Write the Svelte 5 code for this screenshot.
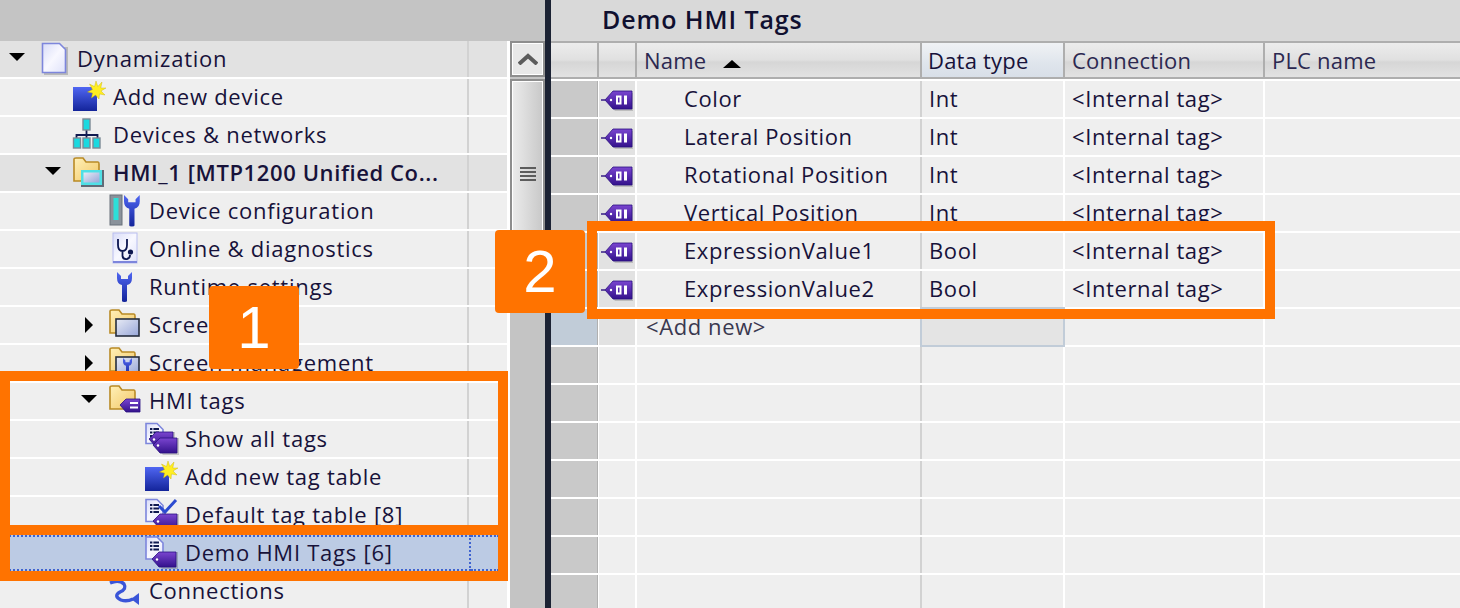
<script>
	const treeRows = [
		{ level: 0, arrow: 'open', icon: 'doc', label: 'Dynamization', dark: true },
		{ level: 1, icon: 'add', label: 'Add new device' },
		{ level: 1, icon: 'network', label: 'Devices & networks' },
		{ level: 1, arrow: 'open', icon: 'folderHmi', label: 'HMI_1 [MTP1200 Unified Co...', dark: true, strong: true },
		{ level: 2, icon: 'config', label: 'Device configuration' },
		{ level: 2, icon: 'online', label: 'Online & diagnostics' },
		{ level: 2, icon: 'wrench', label: 'Runtime settings' },
		{ level: 2, arrow: 'closed', icon: 'folderScreen', label: 'Screens' },
		{ level: 2, arrow: 'closed', icon: 'folderMgmt', label: 'Screen management' },
		{ level: 2, arrow: 'open', icon: 'folderTag', label: 'HMI tags' },
		{ level: 3, icon: 'showTags', label: 'Show all tags' },
		{ level: 3, icon: 'add', label: 'Add new tag table' },
		{ level: 3, icon: 'defaultTable', label: 'Default tag table [8]' },
		{ level: 3, icon: 'tagTable', label: 'Demo HMI Tags [6]', selected: true },
		{ level: 2, icon: 'connections', label: 'Connections' }
	];

	const tags = [
		{ name: 'Color', type: 'Int' },
		{ name: 'Lateral Position', type: 'Int' },
		{ name: 'Rotational Position', type: 'Int' },
		{ name: 'Vertical Position', type: 'Int' },
		{ name: 'ExpressionValue1', type: 'Bool' },
		{ name: 'ExpressionValue2', type: 'Bool' }
	];

	const emptyRows = Array(7);
</script>

{#snippet tagShape(x, y)}
	<g transform="translate({x} {y})">
		<path d="M2 9 L10 1 H26 V18 H10 Z" fill="#000" opacity="0.18" />
		<path d="M0 8 L7 1 H24 V16 H7 Z" fill="url(#tagFill)" stroke="#2a0f80" stroke-width="0.8" />
		<circle cx="5" cy="8.5" r="1.2" fill="#fff" />
	</g>
{/snippet}

{#snippet page(x, y, w, h)}
	<path d="M{x} {y} H{x + w - 6} L{x + w} {y + 6} V{y + h} H{x} Z" fill="url(#pageFill)" stroke="#7d86dc" stroke-width="1.6" />
{/snippet}

{#snippet tableLines(y)}
	<path d="M{5} {y} H14 M5 {y + 3.5} H14 M5 {y + 7} H14" stroke="#101a50" stroke-width="1.8" stroke-dasharray="2.4 1 7" />
{/snippet}

{#snippet folder()}
	<path d="M1 26 V4 Q1 3 3 3 H10 L13 7 H25 Q26 7 26 9 V26 Z" fill="url(#folderFill)" stroke="#b98a25" stroke-width="1.6" />
{/snippet}

{#snippet blueWrench(x, y, s)}
	<path transform="translate({x} {y}) scale({s})" d="M0 0 V6 Q0 12 5 13 V29 Q5 30 7.5 30 Q10 30 10 29 V13 Q15 12 15 6 V0 L11 4 V7 H4 V4 Z" fill="url(#blueFill)" />
{/snippet}

{#snippet icon(name)}
	<svg class="icon" viewBox="0 0 40 36" width="40" height="36" aria-hidden="true">
		{#if name === 'doc'}
			<rect x="7" y="6" width="24" height="28" fill="#000" opacity="0.18" />
			{@render page(5.5, 2.5, 23, 29)}
		{:else if name === 'add'}
			<rect x="0" y="8" width="24" height="24" fill="url(#blueFill)" />
			<path d="M23 2 L24.8 7.5 L29 3 L27.8 9 L33 9 L28 12 L32 16 L26.5 15 L26 20 L22.5 16 L18.5 19 L19.5 14 L14.5 13 L19.5 10.5 L16.5 5 L21.5 7.5 Z" fill="#ffee22" stroke="#c7b100" stroke-width="0.4" />
		{:else if name === 'network'}
			<path d="M13.5 12 V18 M3.5 22 V18 H24.5 V22 M13.5 18 V22" stroke="#101a50" stroke-width="1.8" fill="none" />
			<rect x="10" y="2" width="7" height="11" fill="#19d9e0" stroke="#7c8a96" stroke-width="1.4" />
			<rect x="0.5" y="21" width="7" height="10" fill="#19d9e0" stroke="#7c8a96" stroke-width="1.4" />
			<rect x="10" y="21" width="7" height="10" fill="#19d9e0" stroke="#7c8a96" stroke-width="1.4" />
			<rect x="20" y="21" width="7" height="10" fill="#19d9e0" stroke="#7c8a96" stroke-width="1.4" />
		{:else if name === 'folderHmi'}
			{@render folder()}
			<rect x="8" y="15" width="23" height="17" fill="#5f6b78" />
			<rect x="8" y="15" width="21" height="15" fill="#4fe0e6" />
			<rect x="10.5" y="17.5" width="16" height="10" fill="url(#screenFill)" />
		{:else if name === 'folderScreen'}
			{@render folder()}
			<rect x="7" y="12" width="23" height="17" fill="url(#screenFill)" stroke="#262e3e" stroke-width="1.6" />
		{:else if name === 'folderMgmt'}
			{@render folder()}
			<rect x="7" y="12" width="23" height="17" fill="url(#screenFill)" stroke="#262e3e" stroke-width="1.6" />
			{@render blueWrench(14, 13, 0.6)}
		{:else if name === 'folderTag'}
			{@render folder()}
			<path d="M11 22 L17 16 H31 V29 H17 Z" fill="url(#tagFill)" stroke="#2a0f80" stroke-width="0.8" />
			<rect x="21" y="19" width="8" height="2" fill="#fff" />
			<rect x="21" y="23.5" width="8" height="2" fill="#fff" />
		{:else if name === 'config'}
			<rect x="1" y="2" width="12" height="30" fill="#8a929b" stroke="#68707a" />
			<rect x="4.5" y="5" width="5" height="22" fill="#2ce0d8" />
			{@render blueWrench(15, 2, 1.05)}
		{:else if name === 'online'}
			<rect x="4" y="2" width="24" height="30" fill="url(#pageFill)" stroke="#b9bef0" />
			<rect x="4" y="30" width="24" height="2" fill="#7d86dc" />
			<path d="M9 8 V14 Q9 20 13.5 20 Q18 20 18 14 V8 M13.5 20 V25 Q14 28.5 18 28 Q21 27.5 21 24" fill="none" stroke="#0c1650" stroke-width="1.8" />
			<circle cx="21.5" cy="21" r="2.6" fill="#0c1650" />
		{:else if name === 'wrench'}
			{@render blueWrench(8, 3, 1)}
		{:else if name === 'showTags'}
			{@render page(1, 2.5, 17, 20)}
			{@render tableLines(8)}
			{@render tagShape(4, 10)}
			{@render tagShape(8, 16)}
		{:else if name === 'defaultTable'}
			{@render page(1, 2.5, 17, 22)}
			{@render tableLines(8)}
			<path d="M14 9 L20 15 L31 3" fill="none" stroke="#2c4bd0" stroke-width="3" />
			{@render tagShape(8, 16)}
		{:else if name === 'tagTable'}
			{@render page(1, 2, 17, 22)}
			{@render tableLines(7.5)}
			{@render tagShape(7, 16)}
		{:else if name === 'connections'}
			<path d="M1 10 Q10 6 15 11 Q18 16 11 19 Q4 23 12 27 Q18 29 24 26" fill="none" stroke="#3a55d8" stroke-width="3.4" />
			<path d="M22 26 L30 20 V32 Z" fill="#3a55d8" />
		{/if}
	</svg>
{/snippet}

{#snippet tableCells(name, type, conn)}
	<div class="cell tag-cell">
		<svg viewBox="0 0 36 36" width="36" height="36" aria-hidden="true">
			<path d="M8 20 L16 12 H34 V30 H16 Z" fill="#000" opacity="0.16" />
			<path d="M2 19 H6" stroke="#2a0f80" stroke-width="1.4" />
			<path d="M6 19 L14 10 H33 V28 H14 Z" fill="url(#tagFill)" stroke="#2a0f80" stroke-width="0.8" />
			<circle cx="12" cy="19" r="1.2" fill="#fff" />
			<path d="M17 14.5 H22.5 V23.5 H17 Z M19 16.5 V21.5 H20.5 V16.5 Z" fill="#fff" fill-rule="evenodd" />
			<rect x="25" y="14.5" width="3" height="9" fill="#fff" />
		</svg>
	</div>
	<div class="cell name">{name}</div>
	<div class="cell sep">{type}</div>
	<div class="cell">{conn}</div>
	<div class="cell"></div>
{/snippet}

<svg class="defs" width="0" height="0" aria-hidden="true">
	<defs>
		<linearGradient id="tagFill" x1="0" y1="0" x2="0" y2="1">
			<stop offset="0" stop-color="#7a45d0" />
			<stop offset="1" stop-color="#34128c" />
		</linearGradient>
		<linearGradient id="blueFill" x1="0" y1="0" x2="0" y2="1">
			<stop offset="0" stop-color="#4f66f2" />
			<stop offset="1" stop-color="#13249a" />
		</linearGradient>
		<linearGradient id="pageFill" x1="0" y1="0" x2="1" y2="1">
			<stop offset="0" stop-color="#d8dcf8" />
			<stop offset="0.5" stop-color="#f8f8ff" />
			<stop offset="1" stop-color="#dfe2fa" />
		</linearGradient>
		<linearGradient id="folderFill" x1="0" y1="0" x2="1" y2="1">
			<stop offset="0" stop-color="#fff0b8" />
			<stop offset="1" stop-color="#f2c765" />
		</linearGradient>
		<linearGradient id="screenFill" x1="0" y1="0" x2="1" y2="1">
			<stop offset="0" stop-color="#e8ebf5" />
			<stop offset="1" stop-color="#97a6d8" />
		</linearGradient>
	</defs>
</svg>

<main class="screen">
	<section class="left">
		<div class="left-head"></div>
		<div class="left-body">
			<div class="tree">
				{#each treeRows as row}
					<div class="tree-row" class:dark={row.dark} class:selected={row.selected}>
						<div class="tree-main" style="padding-left: {5 + row.level * 36}px">
							<span class="arrow {row.arrow ?? ''}"></span>
							{@render icon(row.icon)}
							<span class="label" class:strong={row.strong}>{row.label}</span>
						</div>
						<div class="tree-extra"></div>
					</div>
				{/each}
			</div>
			<div class="scrollbar">
				<div class="scroll-up">
					<svg viewBox="0 0 20 12" width="20" height="12" aria-hidden="true">
						<path d="M1 11 L10 3 L19 11" fill="none" stroke="#5c5c5c" stroke-width="4" />
					</svg>
				</div>
				<div class="scroll-thumb">
					<span class="grip"></span>
				</div>
			</div>
		</div>
	</section>

	<div class="divider"></div>

	<section class="right">
		<h1 class="title">Demo HMI Tags</h1>
		<div class="table">
			<div class="row head">
				<div class="cell"></div>
				<div class="cell"></div>
				<div class="cell">Name <span class="sort"></span></div>
				<div class="cell active">Data type</div>
				<div class="cell">Connection</div>
				<div class="cell">PLC name</div>
			</div>
			{#each tags as tag}
				<div class="row">
					<div class="cell gutter"></div>
					{@render tableCells(tag.name, tag.type, '<Internal tag>')}
				</div>
			{/each}
			<div class="row add-row">
				<div class="cell gutter picked"></div>
				<div class="cell tag-cell"></div>
				<div class="cell add-new">&lt;Add new&gt;</div>
				<div class="cell sep focus"></div>
				<div class="cell"></div>
				<div class="cell"></div>
			</div>
			{#each emptyRows as _}
				<div class="row">
					<div class="cell gutter"></div>
					<div class="cell"></div>
					<div class="cell"></div>
					<div class="cell sep"></div>
					<div class="cell"></div>
					<div class="cell"></div>
				</div>
			{/each}
		</div>
	</section>

	<div class="mark mark-tree"></div>
	<div class="mark mark-selected"></div>
	<div class="mark mark-tags"></div>
	<div class="badge badge-one">1</div>
	<div class="badge badge-two">2</div>
</main>

<style>
	:global(body) {
		margin: 0;
		background: #fff;
	}
	.defs {
		position: absolute;
	}
	.screen {
		position: relative;
		display: flex;
		width: 1460px;
		height: 608px;
		overflow: hidden;
		font-family: 'Open Sans', 'Liberation Sans', sans-serif;
		font-size: 22px;
		letter-spacing: 0.75px;
		color: #17123a;
	}

	/* left pane */
	.left {
		width: 545px;
		flex-shrink: 0;
	}
	.left-head {
		height: 41px;
		background: #c4c4c4;
	}
	.left-body {
		display: flex;
		height: 567px;
	}
	.tree {
		width: 509px;
		flex-shrink: 0;
	}
	.tree-row {
		display: flex;
		height: 36px;
		margin-bottom: 2px;
		padding-right: 2px;
	}
	.tree-main {
		display: flex;
		align-items: center;
		width: 469px;
		box-sizing: border-box;
		background: #efefef;
		border-right: 2px solid #d2d2d2;
		white-space: nowrap;
	}
	.tree-extra {
		flex: 1;
		background: #efefef;
	}
	.dark .tree-main,
	.dark .tree-extra {
		background: #e2e2e2;
	}
	.selected {
		padding-right: 10px;
	}
	.selected .tree-main {
		width: 471px;
		background: #bccbe4;
		border: 2px dotted #3f63d0;
		border-left: 0;
	}
	.selected .tree-extra {
		background: #bccbe4;
		border-top: 2px dotted #3f63d0;
		border-bottom: 2px dotted #3f63d0;
	}
	.arrow {
		display: block;
		position: relative;
		width: 32px;
		height: 36px;
		flex-shrink: 0;
	}
	.arrow.open::after {
		content: '';
		position: absolute;
		left: 4px;
		top: 12px;
		border-left: 8px solid transparent;
		border-right: 8px solid transparent;
		border-top: 8px solid #000;
	}
	.arrow.closed::after {
		content: '';
		position: absolute;
		left: 8px;
		top: 10px;
		border-top: 8px solid transparent;
		border-bottom: 8px solid transparent;
		border-left: 8px solid #000;
	}
	.icon {
		flex-shrink: 0;
		overflow: visible;
	}
	.label {
		line-height: 34px;
		padding-bottom: 2px;
	}
	.strong {
		font-weight: 600;
		letter-spacing: 0.6px;
	}

	/* scrollbar */
	.scrollbar {
		flex: 1;
		display: flex;
		flex-direction: column;
		background: #c4c4c4;
		border-left: 1px solid #fff;
	}
	.scroll-up {
		display: flex;
		align-items: center;
		justify-content: center;
		height: 36px;
		box-sizing: border-box;
		background: #e8e8e8;
		border: 2px solid #8e8e8e;
		box-shadow: inset 0 0 0 1px #fff;
	}
	.scroll-thumb {
		display: flex;
		align-items: center;
		justify-content: center;
		height: 190px;
		margin-top: 2px;
		box-sizing: border-box;
		background: linear-gradient(to right, #ececec, #c8c8c8);
		border: 2px solid #8e8e8e;
		box-shadow: inset 0 0 0 1px #fff;
	}
	.grip {
		width: 16px;
		height: 14px;
		background: repeating-linear-gradient(#5c5c5c 0 2px, transparent 2px 4px);
	}

	.divider {
		width: 6px;
		flex-shrink: 0;
		background: #1b2233;
	}

	/* right pane */
	.right {
		flex: 1;
		min-width: 0;
	}
	.title {
		height: 41px;
		margin: 0;
		padding-left: 51px;
		background: #d9d9d9;
		font-size: 25px;
		font-weight: 600;
		line-height: 39px;
		letter-spacing: 0.9px;
		color: #101030;
	}
	.table {
		background: #fff;
	}
	.row {
		display: grid;
		grid-template-columns: 46px 36px 283px 141px 198px 1fr;
		column-gap: 2px;
		height: 36px;
		margin-bottom: 2px;
		letter-spacing: 0.6px;
	}
	.cell {
		padding-left: 7px;
		background: #efefef;
		line-height: 34px;
		white-space: nowrap;
		box-sizing: border-box;
	}
	.head {
		height: 38px;
		margin-bottom: 2px;
		padding: 2px 0;
		box-sizing: border-box;
		background: #aeaeae;
		letter-spacing: 0.2px;
	}
	.head .cell {
		background: linear-gradient(#ececec, #e0e0e0 50%, #d6d6d6 56%, #e2e2e2);
		color: #2b2850;
	}
	.head .active {
		padding-left: 6px;
		background: linear-gradient(#f0f2f5, #dfe5ec 60%, #d8dfe8);
		color: #17123a;
	}
	.sort {
		display: inline-block;
		margin-left: 11px;
		vertical-align: 1px;
		border-left: 9px solid transparent;
		border-right: 9px solid transparent;
		border-bottom: 8px solid #000;
	}
	.gutter {
		background: #c9c9c9;
		box-shadow: 1px 0 0 #b0b0b0;
	}
	.picked {
		background: #c1ccd8;
	}
	.tag-cell {
		padding: 0;
		background: #e2e2e2;
	}
	.tag-cell svg {
		display: block;
		overflow: visible;
	}
	.name {
		padding-left: 47px;
	}
	.add-new {
		padding-left: 9px;
	}
	.sep {
		box-shadow: -2px 0 0 #d2d2d2;
	}
	.focus {
		background: #e4e4e4;
		outline: 2px solid #c1ccd8;
		outline-offset: 0;
	}
	.add-row .cell {
		color: #3a3850;
	}

	/* annotations on top of the screenshot */
	.mark {
		position: absolute;
		box-sizing: border-box;
		border: 10px solid #ff7300;
		pointer-events: none;
	}
	.mark-tree {
		left: 0;
		top: 371px;
		width: 508px;
		height: 164px;
	}
	.mark-selected {
		left: 0;
		top: 525px;
		width: 508px;
		height: 56px;
	}
	.mark-tags {
		left: 587px;
		top: 221px;
		width: 688px;
		height: 98px;
	}
	.badge {
		position: absolute;
		display: flex;
		align-items: center;
		justify-content: center;
		width: 90px;
		height: 83px;
		border-radius: 4px;
		background: #ff7300;
		color: #fff;
		font-family: 'Liberation Sans', sans-serif;
		font-size: 60px;
		letter-spacing: 0;
	}
	.badge-one {
		left: 209px;
		top: 286px;
	}
	.badge-two {
		left: 495px;
		top: 230px;
	}
</style>
